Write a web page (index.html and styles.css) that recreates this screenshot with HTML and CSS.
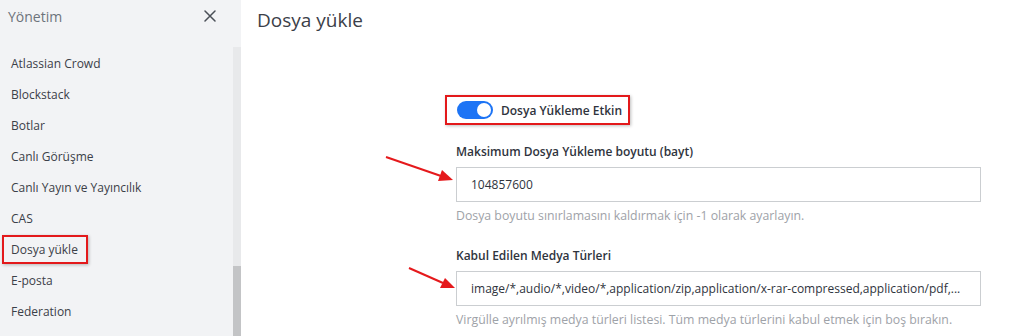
FILE: index.html
```html
<!DOCTYPE html>
<html lang="tr">
<head>
    <meta charset="UTF-8">
    <meta name="viewport" content="width=device-width, initial-scale=1.0">
    <title>Dosya yükle</title>
    <link rel="stylesheet" href="styles.css">
</head>
<body>
    <div class="layout">
        <aside class="sidebar">
            <div class="sidebar-header">
                <span class="sidebar-title">Yönetim</span>
                <svg class="close-icon" width="12" height="12" viewBox="0 0 12 12">
                    <path d="M1 1 L11 11 M11 1 L1 11" stroke="#4a4f57" stroke-width="1.5" stroke-linecap="round"/>
                </svg>
            </div>
            <div class="sidebar-body">
                <ul class="nav-list">
                    <li class="nav-item">Atlassian Crowd</li>
                    <li class="nav-item">Blockstack</li>
                    <li class="nav-item">Botlar</li>
                    <li class="nav-item">Canlı Görüşme</li>
                    <li class="nav-item">Canlı Yayın ve Yayıncılık</li>
                    <li class="nav-item">CAS</li>
                    <li class="nav-item"><span class="marked">Dosya yükle</span></li>
                    <li class="nav-item">E-posta</li>
                    <li class="nav-item">Federation</li>
                </ul>
                <div class="scroll-track">
                    <div class="scroll-thumb"></div>
                </div>
            </div>
        </aside>

        <main class="content">
            <h1 class="page-title">Dosya yükle</h1>

            <!-- annotation arrows -->
            <svg class="arrows" width="120" height="140" viewBox="0 0 120 140">
                <line x1="7" y1="2" x2="62" y2="21" stroke="#e5191c" stroke-width="2"/>
                <polygon points="74,25 59,26 63,15" fill="#e5191c"/>
                <line x1="30" y1="113" x2="64" y2="128" stroke="#e5191c" stroke-width="2"/>
                <polygon points="76,133 61,133 66,123" fill="#e5191c"/>
            </svg>

            <div class="settings">
                <div class="toggle-row marked-box">
                    <span class="toggle"><span class="knob"></span></span>
                    <span class="toggle-label">Dosya Yükleme Etkin</span>
                </div>

                <div class="field">
                    <label class="field-label">Maksimum Dosya Yükleme boyutu (bayt)</label>
                    <div class="input">104857600</div>
                    <div class="hint">Dosya boyutu sınırlamasını kaldırmak için -1 olarak ayarlayın.</div>
                </div>

                <div class="field">
                    <label class="field-label">Kabul Edilen Medya Türleri</label>
                    <div class="input">image/*,audio/*,video/*,application/zip,application/x-rar-compressed,application/pdf,...</div>
                    <div class="hint">Virgülle ayrılmış medya türleri listesi. Tüm medya türlerini kabul etmek için boş bırakın.</div>
                </div>
            </div>
        </main>
    </div>
</body>
</html>
```

FILE: styles.css
```css
* {
    box-sizing: border-box;
}
body {
    margin: 0;
    font-family: "Open Sans", "Noto Sans", sans-serif;
    font-size: 12px;
    color: #2f343d;
    background-color: white;
    overflow: hidden;
}
.layout {
    display: flex;
    height: 336px;
    overflow: hidden;
}
.sidebar {
    width: 241px;
    flex-shrink: 0;
    background-color: #f2f3f5;
    display: flex;
    flex-direction: column;
}
.sidebar-header {
    height: 47px;
    display: flex;
    align-items: flex-start;
    justify-content: space-between;
    padding: 6px 25px 0 8px;
}
.sidebar-title {
    font-size: 14px;
    line-height: 22px;
    color: #6d737b;
}
.close-icon {
    margin-top: 4px;
}
.sidebar-body {
    flex: 1;
    display: flex;
    min-height: 0;
}
.nav-list {
    list-style: none;
    margin: 0;
    padding: 1px 0 0;
    flex: 1;
}
.nav-item {
    height: 31px;
    line-height: 31px;
    padding-left: 11px;
    font-size: 12px;
    color: #3b4048;
}
.marked {
    position: relative;
    display: inline-block;
}
.marked::after {
    content: "";
    position: absolute;
    left: -9px;
    right: -10px;
    top: 1px;
    bottom: 1px;
    border: 2px solid #e3191b;
    box-shadow: 1px 1px 3px rgba(0,0,0,0.25);
}
.scroll-track {
    width: 8px;
    background-color: #e8e9eb;
    display: flex;
    flex-direction: column;
}
.scroll-thumb {
    margin-top: 219px;
    flex: 1;
    background-color: #c3c4c6;
}
.content {
    flex: 1;
    position: relative;
    padding-left: 16px;
}
.page-title {
    margin: 0;
    font-size: 19px;
    font-weight: normal;
    line-height: 40px;
    color: #3b4048;
}
.arrows {
    position: absolute;
    left: 138px;
    top: 155px;
}
.settings {
    margin-left: 199px;
    width: 525px;
    padding-top: 55px;
}
.toggle-row {
    display: inline-flex;
    align-items: center;
    gap: 8px;
    height: 30px;
    padding: 0 6px 0 10px;
    margin-left: -11px;
}
.marked-box {
    border: 2px solid #e3191b;
    box-shadow: 1px 1px 3px rgba(0,0,0,0.25);
}
.toggle {
    width: 36px;
    height: 18px;
    border-radius: 9px;
    background-color: #1d74f5;
    display: flex;
    align-items: center;
    justify-content: flex-end;
    padding-right: 2px;
}
.knob {
    width: 14px;
    height: 14px;
    border-radius: 50%;
    background-color: white;
}
.toggle-label {
    font-weight: 600;
    font-size: 12px;
}
.field {
    margin-top: 17px;
}
.field + .field {
    margin-top: 20px;
}
.field-label {
    display: block;
    font-weight: 600;
    font-size: 12px;
    line-height: 20px;
    margin-bottom: 5px;
}
.input {
    height: 35px;
    border: 1px solid #cbced1;
    padding: 0 14px;
    line-height: 33px;
    font-size: 12px;
    white-space: nowrap;
    overflow: hidden;
}
.hint {
    margin-top: 4px;
    line-height: 20px;
    color: #9ea2a8;
    font-size: 12.3px;
}
```
